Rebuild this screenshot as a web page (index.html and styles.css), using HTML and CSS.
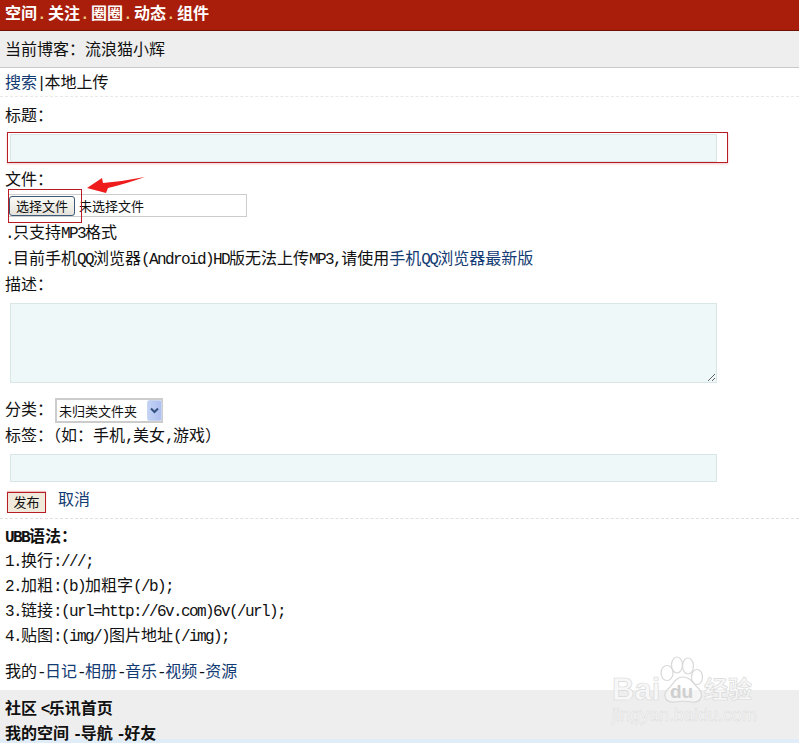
FILE: index.html
```html
<!DOCTYPE html>
<html lang="zh-CN">
<head>
<meta charset="utf-8">
<title>本地上传</title>
<link rel="stylesheet" href="styles.css">
</head>
<body>
<div class="top">空间<b class="dot">.</b>关注<b class="dot">.</b>圈圈<b class="dot">.</b>动态<b class="dot">.</b>组件</div>
<div class="blogger">当前博客：流浪猫小辉</div>
<div class="tabs"><a href="#">搜索</a> <span class="bar">|</span>本地上传</div>
<form class="form">
  <div class="label l-title">标题：</div>
  <div class="mark-title"><input class="field" type="text"></div>
  <div class="label l-file">文件：</div>
  <div class="file-row">
    <div class="mark-file"></div>
    <div class="file"><button class="pick" type="button">选择文件</button><span class="none">未选择文件</span></div>
    <svg class="arrow" width="64" height="20" viewBox="0 0 64 20"><path d="M4 12 L19 2 L20 7 Q42 5 62 1 Q42 8 25 12 L23 17 Z" fill="#ee1c1c"/></svg>
  </div>
  <div class="row r1"><span class="lat">.</span>只支持<span class="lat">MP3</span>格式</div>
  <div class="row r2"><span class="lat">.</span>目前手机<span class="lat">QQ</span>浏览器<span class="lat">(Android)HD</span>版无法上传<span class="lat">MP3,</span>请使用<a href="#">手机<span class="lat">QQ</span>浏览器最新版</a></div>
  <div class="label l-desc">描述：</div>
  <textarea class="area"></textarea>
  <div class="cat">分类：<span class="selbox"><select class="sel"><option>未归类文件夹</option></select><svg class="sel-arrow" width="15" height="21" viewBox="0 0 15 21"><defs><linearGradient id="sa" x1="0" y1="0" x2="1" y2="0"><stop offset="0" stop-color="#c3d3f5"/><stop offset="1" stop-color="#aebff0"/></linearGradient></defs><rect x=".5" y=".5" width="14" height="20" rx="2" fill="url(#sa)" stroke="#c9d6f0"/><path d="M4 8.500 L7.500 12 L11 8.500" fill="none" stroke="#33507f" stroke-width="2"/></svg></span></div>
  <div class="label l-tag">标签：（如：手机<span class="lat">,</span>美女<span class="lat">,</span>游戏）</div>
  <input class="field tagf" type="text">
  <div class="actions"><button class="send" type="button">发布</button><a href="#">取消</a></div>
</form>
<div class="ubb">
  <div class="ubb-h"><span class="lat">UBB</span>语法：</div>
  <div class="u"><span class="lat">1.</span>换行<span class="lat">:///;</span></div>
  <div class="u"><span class="lat">2.</span>加粗<span class="lat">:(b)</span>加粗字<span class="lat">(/b);</span></div>
  <div class="u"><span class="lat">3.</span>链接<span class="lat">:(url=http://6v.com)6v(/url);</span></div>
  <div class="u"><span class="lat">4.</span>贴图<span class="lat">:(img/)</span>图片地址<span class="lat">(/img);</span></div>
</div>
<div class="mine">我的<span class="lat">-</span><a href="#">日记</a><span class="lat">-</span><a href="#">相册</a><span class="lat">-</span><a href="#">音乐</a><span class="lat">-</span><a href="#">视频</a><span class="lat">-</span><a href="#">资源</a></div>
<div class="foot">
  <div>社区 <span class="lat">&lt;</span>乐讯首页</div>
  <div>我的空间 <span class="lat">-</span>导航 <span class="lat">-</span>好友</div>
</div>
<div class="edge"></div>
<div class="wm">
  <svg class="paw" width="50" height="50" viewBox="0 0 50 50">
    <g fill="rgba(255,255,255,.4)" stroke="#d8d8d8" stroke-width="1.200">
      <ellipse cx="8" cy="18" rx="6" ry="7.500"/>
      <ellipse cx="18" cy="10" rx="5.500" ry="8"/>
      <ellipse cx="29" cy="11" rx="5.500" ry="8"/>
      <ellipse cx="38" cy="22" rx="5.500" ry="7.500"/>
      <path d="M24 22 C16 22 14 30 9 34 C3 40 6 48 16 47 C22 46 28 46 33 47 C42 48 45 40 40 34 C35 30 32 22 24 22 Z"/>
    </g>
  </svg>
  <span class="wm-bai">Bai</span><span class="wm-du">du</span><span class="wm-jy">经验</span>
  <span class="wm-url">jingyan.baidu.com</span>
</div>
</body>
</html>
```
FILE: styles.css
```css
html, body { margin: 0; padding: 0; }
body {
  width: 799px;
  height: 743px;
  overflow: hidden;
  position: relative;
  background: #fff;
  color: #111;
  font: 16px/24px "Noto Sans CJK SC", sans-serif;
}
a { color: #133b73; text-decoration: none; }
.lat { font-family: "Liberation Mono", monospace; font-size: 16px; letter-spacing: -1.6px; }
.top {
  height: 30px;
  line-height: 25px;
  padding-left: 5px;
  background: #a91e0a;
  border-bottom: 1px solid #6e1205;
  color: #fff;
  font-weight: 700;
}
.dot {
  display: inline-block;
  width: 11px;
  color: #e8c878;
  font-family: "Liberation Mono", monospace;
  text-align: left;
}
.blogger {
  height: 36px;
  line-height: 34px;
  padding-left: 5px;
  background: #eee;
  border-bottom: 1px solid #c8c8c8;
}
.tabs {
  height: 28px;
  line-height: 26px;
  padding-left: 5px;
  border-bottom: 1px dashed #e8e8e8;
}
.bar { display: inline-block; width: 4px; margin-left: -1px; margin-right: 1px; font-family: "Liberation Sans", sans-serif; }
.form { padding-left: 5px; }
.label, .row { height: 24px; line-height: 20px; }
.l-title { margin-top: 7px; }
.mark-title {
  box-sizing: border-box;
  width: 721px;
  height: 31px;
  margin: 4px 0 0 2px;
  padding: 1px 0 0 2px;
  border: 1px solid #b81c24;
  box-shadow: 0 1px 2px #f3c8c8;
}
.field {
  display: block;
  box-sizing: border-box;
  width: 707px;
  height: 28px;
  margin: 0;
  padding: 0;
  background: #eff8f9;
  border: 1px solid #d8e6e6;
  outline: 0;
}
.l-file { margin-top: 5px; line-height: 20px; }
.file-row { position: relative; height: 29px; margin-top: 2px; }
.mark-file {
  position: absolute;
  left: 3px;
  top: -5px;
  width: 72px;
  height: 32px;
  border: 1px solid #b81c24;
  z-index: 1;
}
.arrow { position: absolute; left: 78px; top: -18px; }
.file {
  box-sizing: border-box;
  display: flex;
  align-items: center;
  width: 239px;
  height: 23px;
  margin-left: 3px;
  padding-left: 0;
  border: 1px solid #ccc;
}
.pick {
  box-sizing: border-box;
  width: 66px;
  height: 20px;
  margin-left: 0;
  padding: 0 0 1px;
  border: 1px solid #3c5a78;
  border-radius: 3px;
  background: linear-gradient(#fbfbf8, #e4e2da);
  color: #111;
  font: 13px/17px "Noto Sans CJK SC", sans-serif;
}
.none { margin-left: 4px; font-size: 13px; }
.r1 { margin-top: -3px; height: 26px; line-height: 22px; }
.r2 { height: 26px; line-height: 22px; }
.l-desc { height: 26px; line-height: 22px; }
.area {
  display: block;
  box-sizing: border-box;
  width: 707px;
  height: 80px;
  margin: 5px 0 0 5px;
  padding: 0;
  background: #eff8f9;
  border: 1px solid #d8e6e6;
  outline: 0;
}
.cat { display: flex; align-items: flex-start; height: 25px; margin-top: 15px; line-height: 20px; }
.selbox { position: relative; display: block; width: 108px; height: 25px; margin-left: 2px; }
.sel {
  display: block;
  box-sizing: border-box;
  width: 108px;
  height: 25px;
  margin: 0;
  padding: 0 0 0 2px;
  appearance: none;
  background: #fff;
  border: 2px solid #ccc;
  border-radius: 0;
  color: #111;
  font: 13px "Noto Sans CJK SC", sans-serif;
}
.sel-arrow { position: absolute; right: 1px; top: 2px; }
.l-tag { margin-top: 1px; }
.tagf { margin: 6px 0 0 5px; }
.actions { display: flex; align-items: flex-start; height: 26px; margin-top: 10px; }
.send {
  box-sizing: border-box;
  width: 39px;
  height: 21px;
  margin: 0 0 0 2px;
  padding: 0 0 3px;
  border: 1px solid #b81c24;
  box-shadow: 0 -1px 1px #efc0c0;
  background: #efeadb;
  color: #111;
  font: 13px/15px "Noto Sans CJK SC", sans-serif;
}
.actions a { margin: -6px 0 0 12px; }
.ubb {
  padding: 6px 0 0 5px;
  border-top: 1px dashed #e0e0e0;
}
.ubb-h { height: 25px; line-height: 21px; font-weight: 700; }
.ubb-h .lat { font-weight: 700; }
.u { height: 25px; line-height: 19px; }
.mine { height: 24px; margin-top: 11px; padding-left: 5px; line-height: 18px; }
.foot {
  height: 49px;
  margin-top: 5px;
  padding: 7px 0 0 5px;
  box-sizing: border-box;
  background: #eee;
  font-weight: 700;
  line-height: 21px;
}
.foot div + div { margin-top: 1px; line-height: 20px; }
.foot .lat { font-weight: 700; }
.edge { height: 4px; background: #e0edf9; }
.wm {
  position: absolute;
  left: 612px;
  top: 655px;
  width: 150px;
  height: 70px;
  color: #f7f7f7;
  font-family: "Liberation Sans", sans-serif;
}
.paw { position: absolute; left: 47px; top: 0; }
.wm-bai, .wm-du, .wm-jy, .wm-url { position: absolute; line-height: 1; -webkit-text-stroke: .6px #d8d8d8; }
.wm-bai { left: 0; top: 19px; font-size: 31px; font-weight: 700; }
.wm-du { left: 58px; top: 27px; font-size: 19px; font-weight: 700; color: #cfcfcf; -webkit-text-stroke: 0; }
.wm-jy { left: 92px; top: 21px; font: 700 24px/1 "Noto Sans CJK SC", sans-serif; }
.wm-url { left: 0; top: 51px; font-size: 18px; -webkit-text-stroke: .5px #dcdcdc; }
```
